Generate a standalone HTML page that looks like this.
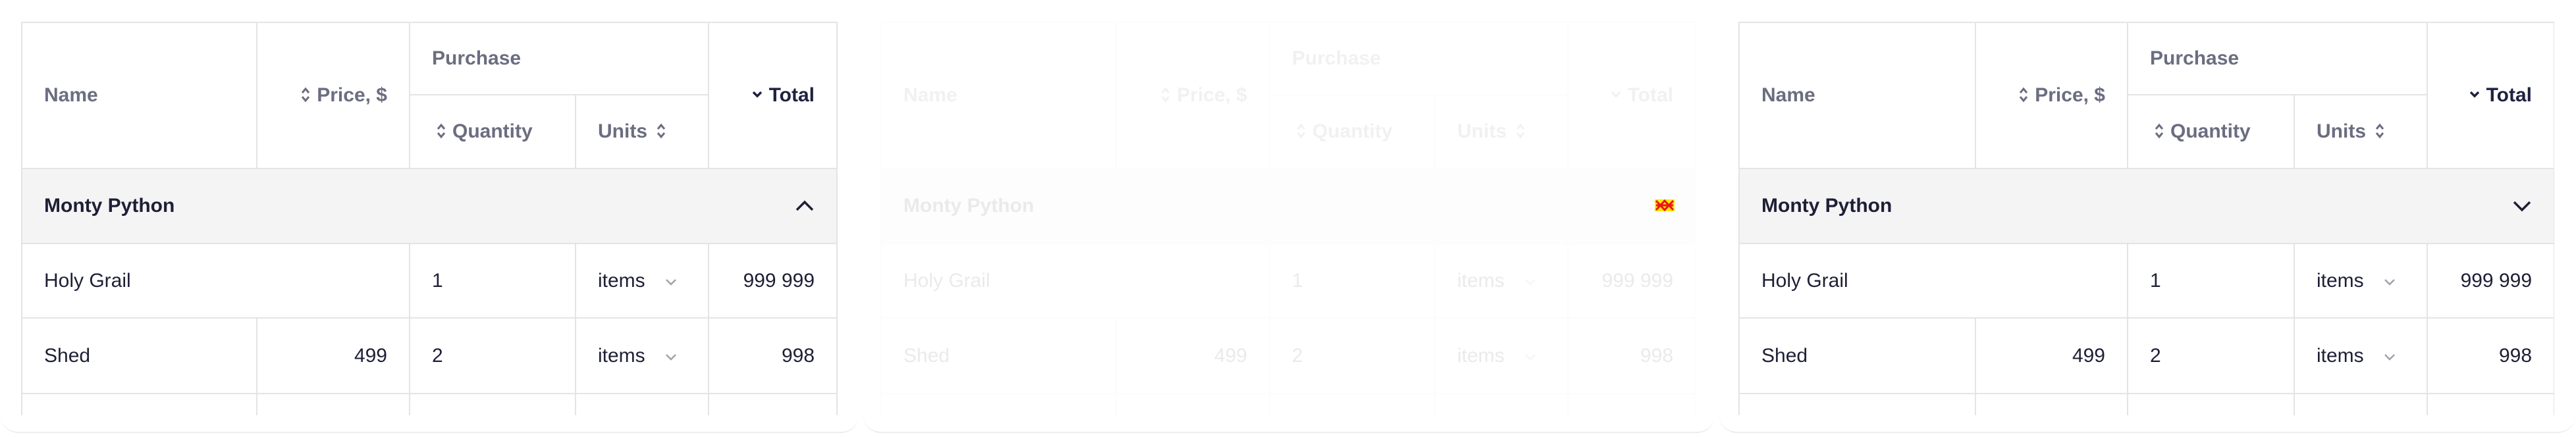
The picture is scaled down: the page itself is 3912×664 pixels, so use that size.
<!DOCTYPE html>
<html><head><meta charset="utf-8"><style>
*{margin:0;padding:0;box-sizing:border-box}
html,body{width:3912px;height:664px;background:#fff;overflow:hidden;font-family:"Liberation Sans",sans-serif}
.card{position:absolute;top:0;height:658px;background:#fff;border-radius:0 0 28px 28px;border-bottom:2px solid #eeeef0}
.wrap{position:absolute;top:33px;height:598px;overflow:hidden}
table{border-collapse:collapse;table-layout:fixed}
td,th{border:2px solid #e4e4e7;font-size:30px;padding:0 33px;white-space:nowrap;vertical-align:middle}
th{color:#6b6d80;font-weight:700;text-align:left}
th.r{text-align:right}
th.dark{color:#1e2140}
td{color:#1e1f35}
td.r{text-align:right}
tr.grp td{background:#f4f4f5;font-weight:700}
.gf{display:flex;justify-content:space-between;align-items:center}
.ico{display:inline-block;vertical-align:middle;margin:0 10px 4px 0}
.sel{display:inline-block;width:82px;overflow:hidden;vertical-align:middle}
.fade{opacity:0.09}
</style></head><body>
<div class="card" style="left:0;width:1305px"></div>
<div class="card" style="left:1310px;width:1295px"></div>
<div class="card" style="left:2610px;width:1302px"></div>

<div class="wrap" style="left:32px;width:1240px">
<table style="width:1238px">
<colgroup><col style="width:357px"><col style="width:232px"><col style="width:252px"><col style="width:202px"><col style="width:195px"></colgroup>
<tr style="height:110px"><th rowspan="2">Name</th><th rowspan="2" class="r"><svg class="ico" width="14" height="26" viewBox="0 0 14 26"><path d="M2 10l5-6 5 6M2 16l5 6 5-6" fill="none" stroke="#6b6d80" stroke-width="3"/></svg>Price, $</th><th colspan="2">Purchase</th><th rowspan="2" class="r dark"><svg class="ico" width="16" height="12" viewBox="0 0 16 12"><path d="M2 2l6 6 6-6" fill="none" stroke="#1e2140" stroke-width="3.5"/></svg>Total</th></tr>
<tr style="height:112px"><th style="padding-left:40px"><svg class="ico" width="14" height="26" viewBox="0 0 14 26"><path d="M2 10l5-6 5 6M2 16l5 6 5-6" fill="none" stroke="#6b6d80" stroke-width="3"/></svg>Quantity</th><th>Units <svg class="ico" style="margin-left:6px" width="14" height="26" viewBox="0 0 14 26"><path d="M2 10l5-6 5 6M2 16l5 6 5-6" fill="none" stroke="#6b6d80" stroke-width="3"/></svg></th></tr>
<tr class="grp" style="height:114px"><td colspan="5"><div class="gf"><span>Monty Python</span><svg width="30" height="20" viewBox="0 0 30 20"><path d="M3 16l12-12 12 12" fill="none" stroke="#1e1f35" stroke-width="3.5"/></svg></div></td></tr>
<tr style="height:113px"><td colspan="2">Holy Grail</td><td>1</td><td><span class="sel">items</span> <svg width="18" height="12" viewBox="0 0 18 12" style="margin-left:12px"><path d="M2 2l7 7 7-7" fill="none" stroke="#a0a1ad" stroke-width="2.5"/></svg></td><td class="r">999 999</td></tr>
<tr style="height:115px"><td>Shed</td><td class="r">499</td><td>2</td><td><span class="sel">items</span> <svg width="18" height="12" viewBox="0 0 18 12" style="margin-left:12px"><path d="M2 2l7 7 7-7" fill="none" stroke="#a0a1ad" stroke-width="2.5"/></svg></td><td class="r">998</td></tr>
<tr style="height:115px"><td></td><td></td><td></td><td></td><td></td></tr>
</table></div>

<div class="wrap fade" style="left:1337px;width:1238px">
<table style="width:1237px">
<colgroup><col style="width:357px"><col style="width:233px"><col style="width:251px"><col style="width:202px"><col style="width:194px"></colgroup>
<tr style="height:110px"><th rowspan="2">Name</th><th rowspan="2" class="r"><svg class="ico" width="14" height="26" viewBox="0 0 14 26"><path d="M2 10l5-6 5 6M2 16l5 6 5-6" fill="none" stroke="#6b6d80" stroke-width="3"/></svg>Price, $</th><th colspan="2">Purchase</th><th rowspan="2" class="r"><svg class="ico" width="16" height="12" viewBox="0 0 16 12"><path d="M2 2l6 6 6-6" fill="none" stroke="#6b6d80" stroke-width="3.5"/></svg>Total</th></tr>
<tr style="height:112px"><th style="padding-left:40px"><svg class="ico" width="14" height="26" viewBox="0 0 14 26"><path d="M2 10l5-6 5 6M2 16l5 6 5-6" fill="none" stroke="#6b6d80" stroke-width="3"/></svg>Quantity</th><th>Units <svg class="ico" style="margin-left:6px" width="14" height="26" viewBox="0 0 14 26"><path d="M2 10l5-6 5 6M2 16l5 6 5-6" fill="none" stroke="#6b6d80" stroke-width="3"/></svg></th></tr>
<tr class="grp" style="height:114px"><td colspan="5">Monty Python</td></tr>
<tr style="height:113px"><td colspan="2">Holy Grail</td><td>1</td><td><span class="sel">items</span> <svg width="18" height="12" viewBox="0 0 18 12" style="margin-left:12px"><path d="M2 2l7 7 7-7" fill="none" stroke="#a0a1ad" stroke-width="2.5"/></svg></td><td class="r">999 999</td></tr>
<tr style="height:115px"><td>Shed</td><td class="r">499</td><td>2</td><td><span class="sel">items</span> <svg width="18" height="12" viewBox="0 0 18 12" style="margin-left:12px"><path d="M2 2l7 7 7-7" fill="none" stroke="#a0a1ad" stroke-width="2.5"/></svg></td><td class="r">998</td></tr>
<tr style="height:115px"><td></td><td></td><td></td><td></td><td></td></tr>
</table></div>
<svg style="position:absolute;left:2513px;top:303px" width="30" height="18" viewBox="0 0 30 18"><rect width="30" height="18" fill="#ffe600"/><path d="M2 2l13 14 13-14M2 16l13-14 13 14M2 9h26" stroke="#e8161b" stroke-width="3" fill="none"/></svg>

<div class="wrap" style="left:2640px;width:1239px">
<table style="width:1238px">
<colgroup><col style="width:359px"><col style="width:231px"><col style="width:253px"><col style="width:202px"><col style="width:193px"></colgroup>
<tr style="height:110px"><th rowspan="2">Name</th><th rowspan="2" class="r"><svg class="ico" width="14" height="26" viewBox="0 0 14 26"><path d="M2 10l5-6 5 6M2 16l5 6 5-6" fill="none" stroke="#6b6d80" stroke-width="3"/></svg>Price, $</th><th colspan="2">Purchase</th><th rowspan="2" class="r dark"><svg class="ico" width="16" height="12" viewBox="0 0 16 12"><path d="M2 2l6 6 6-6" fill="none" stroke="#1e2140" stroke-width="3.5"/></svg>Total</th></tr>
<tr style="height:112px"><th style="padding-left:40px"><svg class="ico" width="14" height="26" viewBox="0 0 14 26"><path d="M2 10l5-6 5 6M2 16l5 6 5-6" fill="none" stroke="#6b6d80" stroke-width="3"/></svg>Quantity</th><th>Units <svg class="ico" style="margin-left:6px" width="14" height="26" viewBox="0 0 14 26"><path d="M2 10l5-6 5 6M2 16l5 6 5-6" fill="none" stroke="#6b6d80" stroke-width="3"/></svg></th></tr>
<tr class="grp" style="height:114px"><td colspan="5"><div class="gf"><span>Monty Python</span><svg width="30" height="20" viewBox="0 0 30 20"><path d="M3 4l12 12 12-12" fill="none" stroke="#1e1f35" stroke-width="3.5"/></svg></div></td></tr>
<tr style="height:113px"><td colspan="2">Holy Grail</td><td>1</td><td><span class="sel">items</span> <svg width="18" height="12" viewBox="0 0 18 12" style="margin-left:12px"><path d="M2 2l7 7 7-7" fill="none" stroke="#a0a1ad" stroke-width="2.5"/></svg></td><td class="r">999 999</td></tr>
<tr style="height:115px"><td>Shed</td><td class="r">499</td><td>2</td><td><span class="sel">items</span> <svg width="18" height="12" viewBox="0 0 18 12" style="margin-left:12px"><path d="M2 2l7 7 7-7" fill="none" stroke="#a0a1ad" stroke-width="2.5"/></svg></td><td class="r">998</td></tr>
<tr style="height:115px"><td></td><td></td><td></td><td></td><td></td></tr>
</table></div>
</body></html>
